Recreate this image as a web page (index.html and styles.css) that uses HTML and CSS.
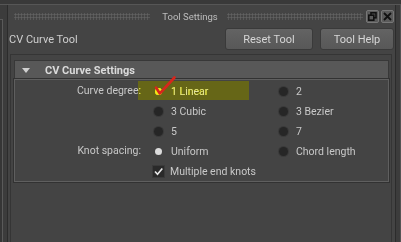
FILE: index.html
```html
<!DOCTYPE html>
<html lang="en">
<head>
<meta charset="UTF-8">
<title>Tool Settings</title>
<link rel="stylesheet" href="styles.css">
</head>
<body>

<div class="topstrip"></div>

<div class="shell">
<div class="edge-left"><div class="neighbour"></div></div>

<div class="panel">

<!-- window title -->
<div class="titlebar">
<span class="grip"></span>
<span class="title">Tool Settings</span>
<span class="grip"></span>
<span class="winbtn">
<svg width="9" height="9" viewBox="0 0 9 9"><rect x="3" y="0.8" width="5" height="5" fill="none" stroke="#111" stroke-width="1.6"/><rect x="0.8" y="3.2" width="5" height="5" fill="#5a5a5a" stroke="#111" stroke-width="1.6"/></svg>
</span>
<span class="winbtn">
<svg width="9" height="9" viewBox="0 0 9 9"><path d="M1 1L8 8M8 1L1 8" stroke="#111" stroke-width="1.8"/></svg>
</span>
</div>

<div class="toolrow">
<span class="toolname">CV Curve Tool</span>
<button class="btn btn-reset">Reset Tool</button>
<button class="btn btn-help">Tool Help</button>
</div>

<div class="scroll">
<div class="frame-head"><span class="arrow"></span>CV Curve Settings</div>

<div class="frame-body">
<div class="grid">
<span class="label">Curve degree:</span>
<span class="opt"><i class="radio on marked"></i>1 Linear</span>
<span class="opt"><i class="radio"></i>2</span>

<span></span>
<span class="opt"><i class="radio"></i>3 Cubic</span>
<span class="opt"><i class="radio"></i>3 Bezier</span>

<span></span>
<span class="opt"><i class="radio"></i>5</span>
<span class="opt"><i class="radio"></i>7</span>

<span class="label">Knot spacing:</span>
<span class="opt"><i class="radio on"></i>Uniform</span>
<span class="opt"><i class="radio"></i>Chord length</span>

<span></span>
<span class="opt check-opt"><i class="checkbox">
<svg width="11" height="11" viewBox="0 0 11 11"><path d="M2 5.5L4.5 8.3L9.3 2.4" fill="none" stroke="#e8e8e8" stroke-width="1.6"/></svg>
</i>Multiple end knots</span>
<span></span>
</div>

<!-- marker highlight and red tick drawn over the first option -->
<div class="marker"></div>
<svg class="tick" width="24" height="22" viewBox="0 0 24 22"><path d="M2 12.5L5.8 18.5L20.5 2.5" fill="none" stroke="#d8261c" stroke-width="2.6" stroke-linecap="round" stroke-linejoin="round"/></svg>
</div>
</div>

</div>

<div class="edge-right"></div>
</div>

</body>
</html>
```

FILE: styles.css
```css
body{
    margin:0;
    width:401px;
    height:242px;
    overflow:hidden;
    background:#3c3c3c;
    font-family: Roboto, "Liberation Sans", sans-serif;
    font-size:10.5px;
    color:#c8c8c8;
}

.topstrip{
    height:4px;
    background:#393939;
    border-bottom:1px solid #565656;
}

.shell{
    display:flex;
    height:237px;
}

.edge-left{
    width:7px;
    padding-top:14px;
}

.neighbour{
    width:2px;
    height:100%;
    border-top:1px solid #5a5a5a;
    border-right:1px solid #5a5a5a;
    background:#363636;
}

.panel{
    width:387px;
    background:#444;
    border-left:1px solid #2c2c2c;
    border-right:1px solid #2c2c2c;
    display:flex;
    flex-direction:column;
}

.edge-right{
    width:4px;
    border-right:1px solid #555;
}

/* title bar */
.titlebar{
    height:22px;
    display:flex;
    align-items:center;
    padding:0 1px 0 6px;
}

.grip{
    flex:1;
    height:7px;
    background-image: radial-gradient(circle, #616161 0.9px, transparent 1.2px);
    background-size:3px 3px;
}

.title{
    font-size:9.5px;
    color:#bdbdbd;
    margin:0 9px 0 12px;
}

.winbtn{
    width:11px;
    height:11px;
    margin-left:3px;
    display:flex;
    align-items:center;
    justify-content:center;
    background:#5a5a5a;
    border:1px solid #777;
    border-radius:2px;
}

.winbtn:last-child{
    margin-left:2px;
}

/* tool name and buttons */
.toolrow{
    height:24px;
    display:flex;
    align-items:center;
    padding:0 1px 0 1px;
}

.toolname{
    flex:1;
    font-size:11px;
    color:#cfcfcf;
}

.btn{
    height:22px;
    font-family: Roboto, "Liberation Sans", sans-serif;
    font-size:11px;
    color:#d6d6d6;
    background:linear-gradient(#636363,#585858);
    border:1px solid #3a3a3a;
    border-radius:3px;
    padding:0;
}

.btn-reset{
    width:88px;
}

.btn-help{
    width:74px;
    margin-left:7px;
}

/* scroll area with the frame layout */
.scroll{
    flex:1;
    margin:3px 3px 0 2px;
    padding:5px 2px 0 3px;
    border:1px solid #353535;
    border-bottom:none;
}

.frame-head{
    height:18px;
    display:flex;
    align-items:center;
    padding-left:7px;
    background:#585858;
    border:1px solid #383838;
    border-bottom:none;
    font-weight:bold;
    font-size:11px;
    color:#dadada;
}

.arrow{
    width:0;
    height:0;
    border-left:4px solid transparent;
    border-right:4px solid transparent;
    border-top:5px solid #d0d0d0;
    margin-right:15px;
}

.frame-body{
    position:relative;
    border:1px solid #5f5f5f;
    box-shadow:0 0 0 1px #323232;
    padding:1px 0 0 0;
}

.grid{
    display:grid;
    grid-template-columns:139px 125px 1fr;
    grid-auto-rows:20px;
}

.label{
    text-align:right;
    padding-right:13px;
    line-height:20px;
}

.opt{
    display:flex;
    align-items:center;
    gap:8px;
}

.radio{
    width:9px;
    height:9px;
    border-radius:50%;
    background:#262626;
    box-shadow:0 0 0 1px #3a3a3a;
}

.radio.on{
    width:7px;
    height:7px;
    margin:0 1px;
    background:#dcdcdc;
    box-shadow:none;
}

.radio.marked{
    background:#e6d448;
}

.check-opt{
    gap:5px;
    margin-left:-2px;
}

.checkbox{
    width:13px;
    height:13px;
    background:#2a2a2a;
    border:1px solid #3a3a3a;
    box-sizing:border-box;
    display:flex;
    align-items:center;
    justify-content:center;
}

.marker{
    position:absolute;
    left:123px;
    top:1px;
    width:111px;
    height:19px;
    background:#c0c02a;
    mix-blend-mode:overlay;
}

.tick{
    position:absolute;
    left:139px;
    top:-5px;
}
```
